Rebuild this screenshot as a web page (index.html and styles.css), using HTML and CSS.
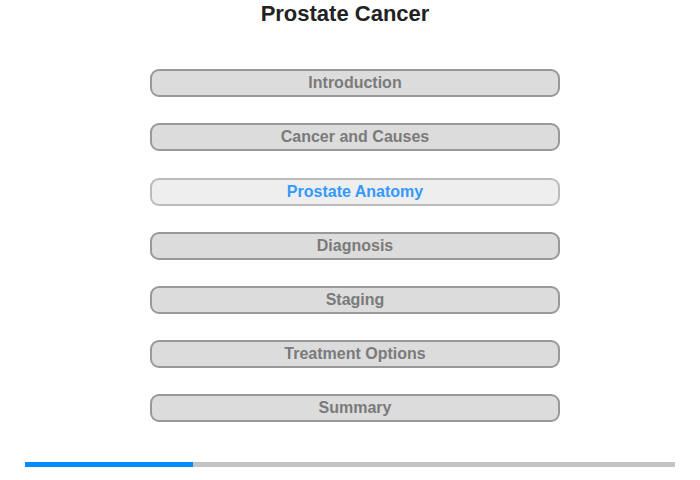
FILE: index.html
```html
<!DOCTYPE html>
<html>
<head>
<meta charset="utf-8">
<link rel="stylesheet" href="styles.css">
</head>
<body>
<div class="page">
  <h1 class="title">Prostate Cancer</h1>
  <nav class="menu">
    <div class="item">Introduction</div>
    <div class="item">Cancer and Causes</div>
    <div class="item active">Prostate Anatomy</div>
    <div class="item">Diagnosis</div>
    <div class="item">Staging</div>
    <div class="item">Treatment Options</div>
    <div class="item">Summary</div>
  </nav>
  <div class="progress"><div class="fill" style="width:168px"></div></div>
</div>
</body>
</html>
```
FILE: styles.css
```css
html, body { margin: 0; padding: 0; background: #fff; }
body { font-family: "Liberation Sans", Arial, sans-serif; }
.page { width: 700px; height: 480px; position: relative; }
.title {
  margin: 0;
  padding-top: 2px;
  padding-right: 10px;
  font-size: 22px;
  line-height: 24px;
  font-weight: bold;
  color: #222;
  text-align: center;
}
.menu {
  display: flex;
  flex-direction: column;
  gap: 26.2px;
  margin: 43.3px 0 0 150px;
  width: 410px;
}
.item {
  box-sizing: border-box;
  height: 28px;
  border: 2px solid #999;
  border-radius: 9px;
  background: #dcdcdc;
  color: #7a7a7a;
  font-size: 16px;
  font-weight: bold;
  line-height: 24px;
  text-align: center;
}
.item.active {
  background: #eeeeee;
  border-color: #bbbbbb;
  color: #3399ff;
}
.progress {
  margin: 40px 0 0 25px;
  width: 650px;
  height: 5px;
  background: #c4c4c4;
}
.fill { height: 5px; background: #008bff; }
```
